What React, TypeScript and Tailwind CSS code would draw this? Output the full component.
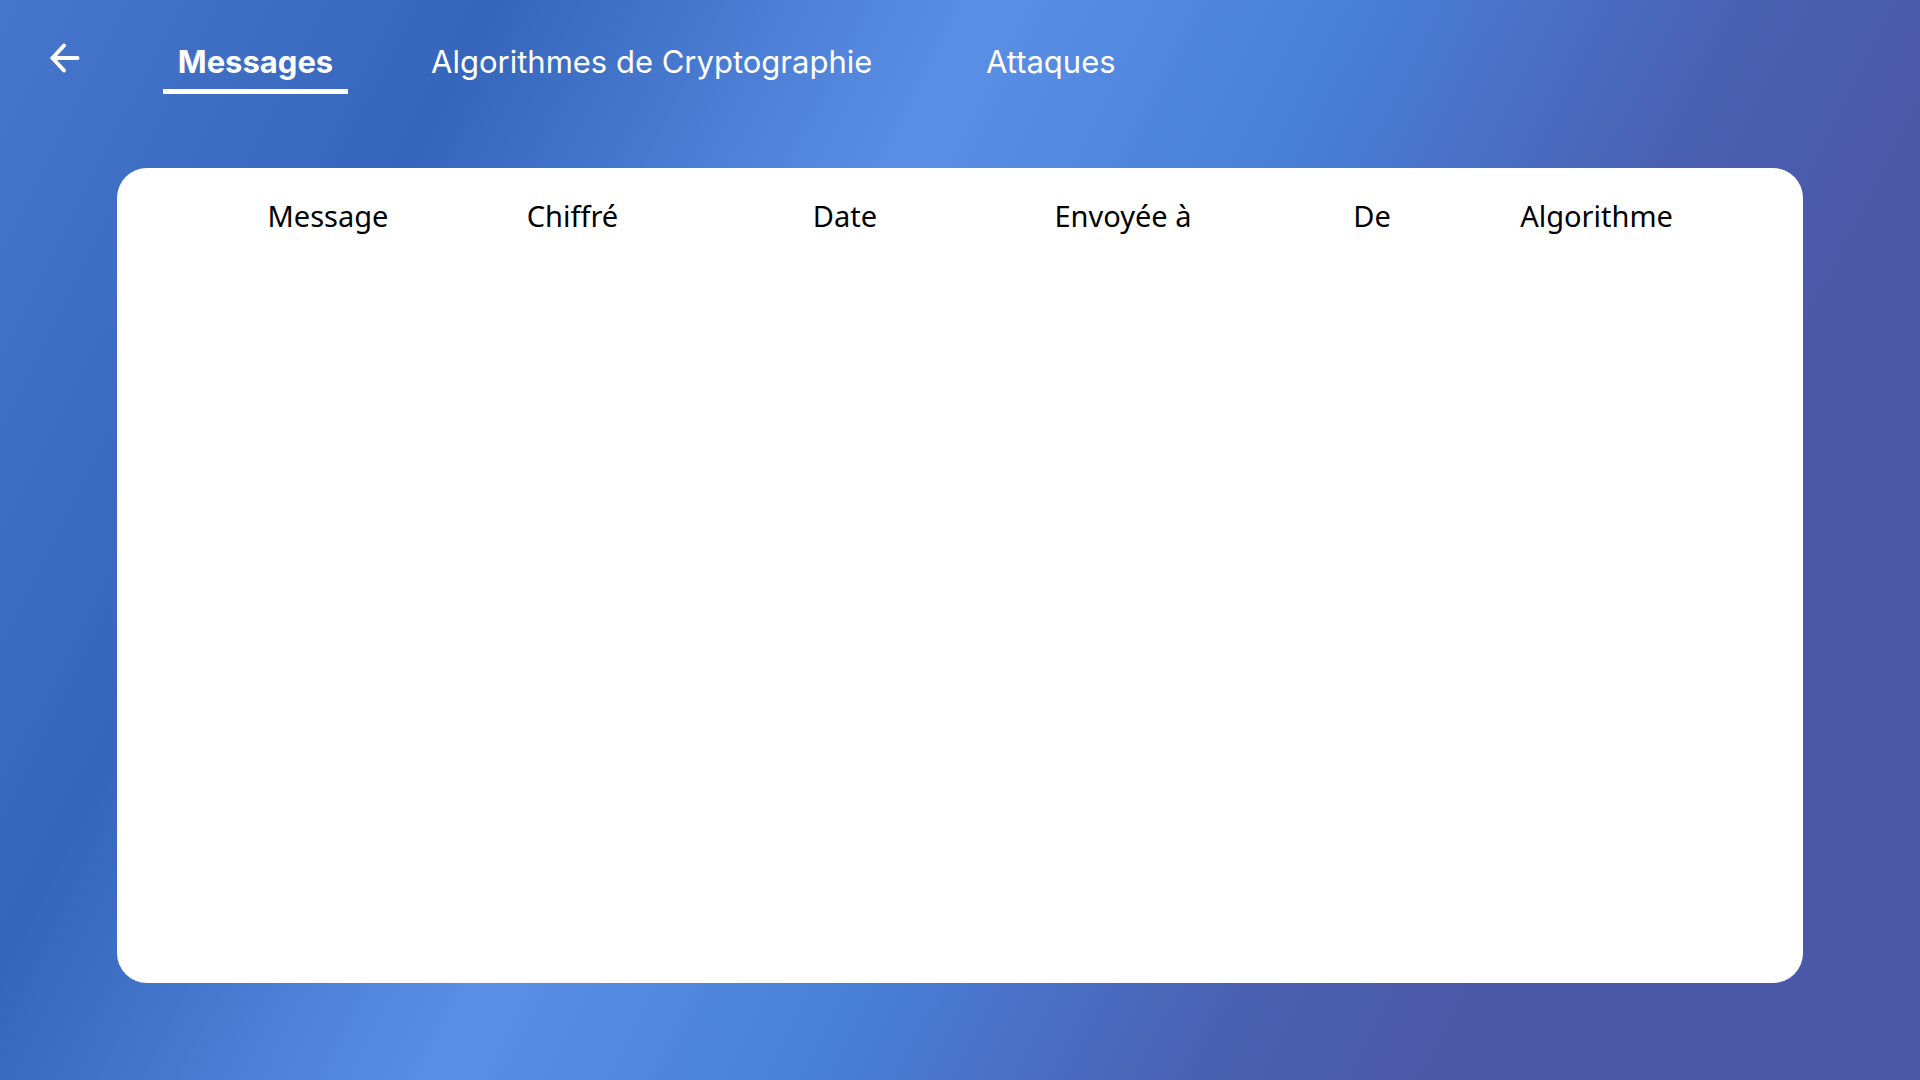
const columns = ["Message", "Chiffré", "Date", "Envoyée à", "De", "Algorithme"];

const BackArrow = () => (
  <svg width="30" height="30" viewBox="0 0 30 30" fill="none" stroke="white" strokeWidth="4" strokeLinecap="round" strokeLinejoin="round">
    <path d="M14 2.5 L2.5 15 L14 27.5" />
    <path d="M2.5 15 H27.5" />
  </svg>
);

export default function App() {
  return (
    <div className="min-h-screen w-full flex flex-col bg-[linear-gradient(117deg,#4677cd_0%,#3566bb_20%,#5b8fe6_40%,#4880d8_55%,#4a62b4_70%,#4b58a8_80%,#4b58a8_100%)] font-['Inter',sans-serif]">
      {/* top navigation */}
      <header className="flex items-start pt-[44px] pl-[50px]">
        <button className="mt-[-1px] flex items-center justify-center">
          <BackArrow />
        </button>
        <nav className="flex items-start ml-[83px] text-white text-[31px] leading-[36px]">
          <button className="w-[185px] pb-[9px] border-b-[5px] border-white font-bold text-center">
            Messages
          </button>
          <button className="ml-[68px] w-[555px] pl-[15px] pb-[9px] border-b-[5px] border-transparent text-left font-normal">
            Algorithmes de Cryptographie
          </button>
          <button className="pl-[15px] pb-[9px] border-b-[5px] border-transparent text-left font-normal">
            Attaques
          </button>
        </nav>
      </header>

      {/* messages table */}
      <main className="mx-[117px] mt-[74px] h-[815px] rounded-[30px] bg-white">
        <div className="grid grid-cols-[230px_259px_286px_270px_228px_221px] pl-[96px] pt-[28px] font-['Noto_Sans',sans-serif] text-[29px] leading-[40px] text-black">
          {columns.map((c) => (
            <div key={c} className="text-center">
              {c}
            </div>
          ))}
        </div>
      </main>
    </div>
  );
}
